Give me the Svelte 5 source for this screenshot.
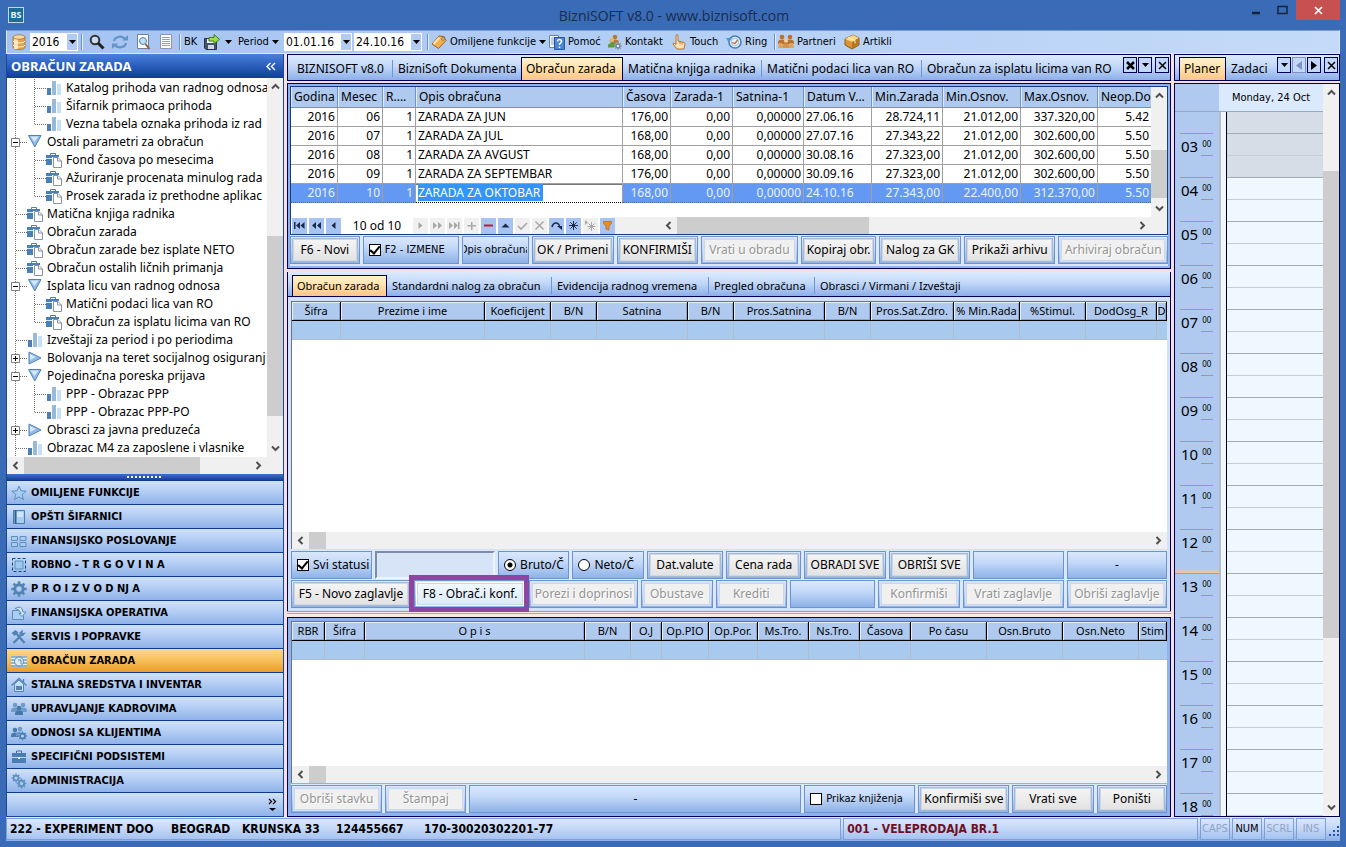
<script>
  const tree = [
    { level: 2, icon: 'bars', text: 'Katalog prihoda van radnog odnosa' },
    { level: 2, icon: 'bars', text: 'Šifarnik primaoca prihoda' },
    { level: 2, icon: 'bars', text: 'Vezna tabela oznaka prihoda iz rad', last: true },
    { level: 1, icon: 'down', text: 'Ostali parametri za obračun', box: '-' },
    { level: 2, icon: 'form', text: 'Fond časova po mesecima' },
    { level: 2, icon: 'form', text: 'Ažuriranje procenata minulog rada' },
    { level: 2, icon: 'form', text: 'Prosek zarada iz prethodne aplikac', last: true },
    { level: 1, icon: 'form', text: 'Matična knjiga radnika' },
    { level: 1, icon: 'form', text: 'Obračun zarada' },
    { level: 1, icon: 'form', text: 'Obračun zarade bez isplate NETO' },
    { level: 1, icon: 'form', text: 'Obračun ostalih ličnih primanja' },
    { level: 1, icon: 'down', text: 'Isplata licu van radnog odnosa', box: '-' },
    { level: 2, icon: 'form', text: 'Matični podaci lica van RO' },
    { level: 2, icon: 'form', text: 'Obračun za isplatu licima van RO', last: true },
    { level: 1, icon: 'bars', text: 'Izveštaji za period i po periodima' },
    { level: 1, icon: 'right', text: 'Bolovanja na teret socijalnog osiguranj', box: '+' },
    { level: 1, icon: 'down', text: 'Pojedinačna poreska prijava', box: '-' },
    { level: 2, icon: 'bars', text: 'PPP - Obrazac PPP' },
    { level: 2, icon: 'bars', text: 'PPP - Obrazac PPP-PO', last: true },
    { level: 1, icon: 'right', text: 'Obrasci za javna preduzeća', box: '+' },
    { level: 1, icon: 'bars', text: 'Obrazac M4 za zaposlene i vlasnike' }
  ];

  const modules = [
    { icon: 'star', text: 'OMILJENE FUNKCIJE' },
    { icon: 'book', text: 'OPŠTI ŠIFARNICI' },
    { icon: 'tiles', text: 'FINANSIJSKO POSLOVANJE' },
    { icon: 'frame', text: 'ROBNO - T R G O V I N A' },
    { icon: 'gear', text: 'P R O I Z V O D NJ A' },
    { icon: 'share', text: 'FINANSIJSKA OPERATIVA' },
    { icon: 'tools', text: 'SERVIS I POPRAVKE' },
    { icon: 'money', text: 'OBRAČUN ZARADA', active: true },
    { icon: 'house', text: 'STALNA SREDSTVA I INVENTAR' },
    { icon: 'people', text: 'UPRAVLJANJE KADROVIMA' },
    { icon: 'client', text: 'ODNOSI SA KLIJENTIMA' },
    { icon: 'case', text: 'SPECIFIČNI PODSISTEMI' },
    { icon: 'gears', text: 'ADMINISTRACIJA' }
  ];

  const links = [
    { icon: 'tag', text: 'Omiljene funkcije', width: 118, menu: true },
    { icon: 'help', text: 'Pomoć', width: 57 },
    { icon: 'contact', text: 'Kontakt', width: 65 },
    { icon: 'hand', text: 'Touch', width: 55 },
    { icon: 'ring', text: 'Ring', width: 45 },
    { sep: true },
    { icon: 'partners', text: 'Partneri', width: 66 },
    { icon: 'box', text: 'Artikli', width: 50 }
  ];

  const mainTabs = [
    { text: 'BIZNISOFT v8.0', width: 101, line: true },
    { text: 'BizniSoft Dokumenta', width: 128 },
    { text: 'Obračun zarada', width: 102, active: true },
    { text: 'Matična knjiga radnika', width: 139, line: true },
    { text: 'Matični podaci lica van RO', width: 160, line: true },
    { text: 'Obračun za isplatu licima van RO', width: 204 }
  ];

  const subTabs = [
    { text: 'Obračun zarada', width: 95, active: true },
    { text: 'Standardni nalog za obračun', width: 165, line: true },
    { text: 'Evidencija radnog vremena', width: 157, line: true },
    { text: 'Pregled obračuna', width: 106, line: true },
    { text: 'Obrasci / Virmani / Izveštaji', width: 166 }
  ];

  const payCols = [
    ['Godina', 47], ['Mesec', 45], ['R....', 33], ['Opis obračuna', 207], ['Časova', 48],
    ['Zarada-1', 62], ['Satnina-1', 71], ['Datum V...', 68], ['Min.Zarada', 71],
    ['Min.Osnov.', 78], ['Max.Osnov.', 77], ['Neop.Do']
  ];

  const payRows = [
    ['2016', '06', '1', 'ZARADA ZA JUN', '176,00', '0,00', '0,00000', '27.06.16', '28.724,11', '21.012,00', '337.320,00', '5.42'],
    ['2016', '07', '1', 'ZARADA ZA JUL', '168,00', '0,00', '0,00000', '27.07.16', '27.343,22', '21.012,00', '302.600,00', '5.50'],
    ['2016', '08', '1', 'ZARADA ZA AVGUST', '168,00', '0,00', '0,00000', '30.08.16', '27.323,00', '21.012,00', '302.600,00', '5.50'],
    ['2016', '09', '1', 'ZARADA ZA SEPTEMBAR', '176,00', '0,00', '0,00000', '30.09.16', '27.323,00', '21.012,00', '302.600,00', '5.50'],
    ['2016', '10', '1', 'ZARADA ZA OKTOBAR', '168,00', '0,00', '0,00000', '24.10.16', '27.343,00', '22.400,00', '312.370,00', '5.50']
  ];

  const workerCols = [
    ['Šifra', 49], ['Prezime i ime', 144], ['Koeficijent', 66], ['B/N', 46], ['Satnina', 91],
    ['B/N', 46], ['Pros.Satnina', 91], ['B/N', 46], ['Pros.Sat.Zdro.', 83], ['% Min.Rada', 66],
    ['%Stimul.', 66], ['DodOsg_R', 71], ['D']
  ];

  const itemCols = [
    ['RBR', 33], ['Šifra', 40], ['O p i s', 220], ['B/N', 46], ['O.J', 31], ['Op.PIO', 47],
    ['Op.Por.', 49], ['Ms.Tro.', 51], ['Ns.Tro.', 51], ['Časova', 51], ['Po času', 76],
    ['Osn.Bruto', 76], ['Osn.Neto', 76], ['Stim']
  ];

  // w is the share of the row, in the same units for every row
  const payActions = [
    { text: 'F6 - Novi', w: 70 }, { text: 'F2 - IZMENE', w: 97, kind: 'check', on: true, small: true },
    { text: 'Opis obračuna', w: 67, kind: 'label', small: true }, { text: 'OK / Primeni', w: 82 },
    { text: 'KONFIRMIŠI', w: 82 }, { text: 'Vrati u obradu', w: 97, off: true },
    { text: 'Kopiraj obr.', w: 76 }, { text: 'Nalog za GK', w: 82 },
    { text: 'Prikaži arhivu', w: 92 }, { text: 'Arhiviraj obračun', w: 110, off: true }
  ];

  const filterActions = [
    { text: 'Svi statusi', w: 82, kind: 'check', on: true }, { text: 'Filter statusa', w: 121, kind: 'input' },
    { text: 'Bruto/Č', w: 72, kind: 'radio', on: true }, { text: 'Neto/Č', w: 72, kind: 'radio' },
    { text: 'Dat.valute', w: 77 }, { text: 'Cena rada', w: 76 }, { text: 'OBRADI SVE', w: 82 },
    { text: 'OBRIŠI SVE', w: 82 }, { text: '', w: 92, kind: 'label' }, { text: '-', w: 101, kind: 'label' }
  ];

  const workerActions = [
    { text: 'F5 - Novo zaglavlje', w: 121 }, { text: 'F8 - Obrač.i konf.', w: 113, hot: true },
    { text: 'Porezi i doprinosi', w: 110, off: true }, { text: 'Obustave', w: 72, off: true },
    { text: 'Krediti', w: 72, off: true }, { text: '', w: 86, kind: 'label' },
    { text: 'Konfirmiši', w: 82, off: true }, { text: 'Vrati zaglavlje', w: 102, off: true },
    { text: 'Obriši zaglavlje', w: 101, off: true }
  ];

  const itemActions = [
    { text: 'Obriši stavku', w: 92, off: true }, { text: 'Štampaj', w: 82, off: true },
    { text: '-', w: 335, kind: 'label' }, { text: 'Prikaz knjiženja', w: 112, kind: 'check', small: true },
    { text: 'Konfirmiši sve', w: 92 }, { text: 'Vrati sve', w: 82 }, { text: 'Poništi', w: 71 }
  ];

  const navBefore = [['first', 'Prvi'], ['rew', 'Strana nazad'], ['prev', 'Prethodni']];
  const navAfter = [
    ['next', 'Sledeći', true], ['fwd', 'Strana napred', true], ['end', 'Poslednji', true], ['plus', 'Dodaj', true],
    ['minus', 'Obriši'], ['up', 'Izmeni'], ['ok', 'Potvrdi', true], ['x', 'Otkaži', true], ['redo', 'Osveži'],
    ['ast', 'Obeleži'], ['goast', 'Idi na obeleženo', true], ['filter', 'Filter']
  ];

  const hours = ['03', '04', '05', '06', '07', '08', '09', '10', '11', '12', '13', '14', '15', '16', '17', '18'];
</script>

{#snippet chevron(dir)}
  <svg class="chev" width="9" height="9" viewBox="0 0 9 9" fill="none" stroke="#505050" stroke-width="2">
    {#if dir === 'up'}<path d="M1 6.5 4.5 3 8 6.5" />
    {:else if dir === 'down'}<path d="M1 2.5 4.5 6 8 2.5" />
    {:else if dir === 'left'}<path d="M6.500 1 3 4.500 6.500 8" />
    {:else}<path d="M2.500 1 6 4.500 2.500 8" />{/if}
  </svg>
{/snippet}

{#snippet scrollbar(axis, before, size)}
  <div class="scroll {axis}">
    <button type="button" aria-label="Nazad">{@render chevron(axis === 'v' ? 'up' : 'left')}</button>
    <div class="track">
      <div style="flex: {before} 1 0px"></div>
      <div class="thumb" style="flex: {size} 1 0px"></div>
      <div style="flex: {100 - before - size} 1 0px"></div>
    </div>
    <button type="button" aria-label="Napred">{@render chevron(axis === 'v' ? 'down' : 'right')}</button>
  </div>
{/snippet}

{#snippet caret()}
  <svg width="7" height="4" viewBox="0 0 7 4"><path d="M0 0h7L3.500 4z" fill="#000" /></svg>
{/snippet}

{#snippet person(x, y, color)}
  <circle cx={x} cy={y} r="2.300" fill={color} />
  <path d="M{x - 4} {y + 7}v-1.500q0-3 4-3t4 3v1.500z" fill={color} />
{/snippet}

{#snippet cog(x, y, r, color)}
  <circle cx={x} cy={y} r={r * 0.6} fill="none" stroke={color} stroke-width={r * 0.42} />
  {#each [0, 45, 90, 135, 180, 225, 270, 315] as a}
    <rect x={x - r * 0.18} y={y - r * 1.1} width={r * 0.36} height={r * 0.4} fill={color} transform="rotate({a} {x} {y})" />
  {/each}
{/snippet}

{#snippet icon(name)}
  <svg class="icon" width="16" height="16" viewBox="0 0 16 16">
    {#if name === 'bars'}
      <path d="M1 8h4v7H1z" fill="#4d7fb0" /><path d="M6 1h4v14H6z" fill="#97b9da" /><path d="M11 4h4v11h-4z" fill="#c8dff5" />
    {:else if name === 'down'}
      <path d="M1.500 1.500h12.500L7.800 13z" fill="#8fbcea" stroke="#5680b2" /><path d="M3.500 2.500h8L7.500 8z" fill="#d5e8fb" />
    {:else if name === 'right'}
      <path d="M2 2v12l12-6z" fill="#8fbcea" stroke="#5680b2" /><path d="M3 4v6l6-3z" fill="#d5e8fb" />
    {:else if name === 'form'}
      <path d="M4.500 3.500v-2h5v2" fill="none" stroke="#4d7fb0" />
      <path d="M0 3h13v2H6v8H0z" fill="#4a80b4" /><path d="M0 6.500h6" stroke="#dce9f6" />
      <path d="M7.500 5.500h4.500l3.500 3.500v6.500h-8z" fill="#fff" stroke="#8a949e" /><path d="M11.500 5.500V9h4" fill="none" stroke="#8a949e" />
    {:else if name === 'star'}
      <path d="M8 1l2 4.800 5.200.4-4 3.300 1.300 5.100L8 11.800l-4.500 2.800 1.300-5.100-4-3.300L6 5.800z" fill="#a4cdf0" stroke="#5e8dbd" />
    {:else if name === 'book'}
      <path d="M2.500 1.500h11v13h-11z" fill="#a7cdf0" stroke="#4d7cab" /><path d="M4.500 1.500v13" stroke="#355f8c" stroke-width="2" />
      <path d="M6 3h6v5H6z" fill="#cde6fa" />
    {:else if name === 'tiles'}
      <g fill="#a8ceef" stroke="#5e8dbd"><path d="M.5 3.500h6v4h-6zM9 3.500h6v4H9zM.5 9.500h6v4h-6zM9 9.500h6v4H9z" /></g>
    {:else if name === 'frame'}
      <path d="M1.500 1.500h13v13h-13z" fill="none" stroke="#17446f" stroke-dasharray="3 2" />
      <path d="M4 4h8v8H4z" fill="#9cc9f0" stroke="#5e8dbd" />
    {:else if name === 'gear'}
      {@render cog(8, 8, 7, '#5384b4')}
    {:else if name === 'share'}
      <path d="M1.500 5.500h7l4 5v4h-11z" fill="#a9d0f3" stroke="#5e8dbd" />
      <path d="M4 3.500q7-4 8 3.500h3l-4 4.500L8 8.500h2q-1-4-6-5z" fill="#cfe6fa" stroke="#5e8dbd" />
    {:else if name === 'tools'}
      <path d="M2.500 14l7-7M5 4l8.500 10" stroke="#5384b4" stroke-width="2.400" />
      <path d="M.5 4l4-3 3 2.500-4 3.500zM8.500 7V3.500L12 .5 11.500 4l3.500-.500L12 7z" fill="#5384b4" />
    {:else if name === 'money'}
      <path d="M0 3h16v11H0z" fill="#8db4cf" /><path d="M0 5.500h16M0 8.500h16M0 11.500h16" stroke="#e7f2f7" />
      <circle cx="8" cy="8.500" r="4.500" fill="#dceaf2" stroke="#5c8eb3" /><path d="M7 7h3v4" fill="none" stroke="#5c8eb3" />
    {:else if name === 'house'}
      <path d="M3.500 7v7.500h9V7L8 3z" fill="#c7e0f8" stroke="#5384b4" />
      <path d="M.5 8.500L8 1.500l7.500 7M12.500 5V2" fill="none" stroke="#5384b4" stroke-width="1.300" /><path d="M5 9h6v4H5z" fill="#5384b4" />
    {:else if name === 'people'}
      {@render person(4, 4, '#6e9bc8')}{@render person(12, 4, '#6e9bc8')}{@render person(8, 7, '#4577aa')}
    {:else if name === 'client'}
      {@render person(4, 5, '#4a7cb0')}{@render person(9, 4, '#6e9bc8')}
      <circle cx="11.500" cy="11" r="4" fill="#b9d2f3" />{@render cog(11.500, 11, 4, '#4a7cb0')}
    {:else if name === 'case'}
      <path d="M5.500 4V2h5v2" fill="none" stroke="#3f72a4" /><path d="M1 4h14v10H1z" fill="#4a7db2" /><path d="M1 8.500h14" stroke="#c2d9f3" />
      <path d="M7 8h2v2H7z" fill="#dceafa" />
    {:else if name === 'gears'}
      {@render cog(5, 5, 4, '#6090c0')}{@render cog(10.500, 10.500, 4.500, '#6090c0')}
    {:else if name === 'db'}
      <path d="M2 3v10q0 2.500 6 2.500t6-2.500V3z" fill="#e3a24d" stroke="#9d6a28" stroke-width=".7" />
      <path d="M5 3v12" stroke="#fde3af" stroke-width="4" /><path d="M2 7q0 2 6 2t6-2M2 11q0 2 6 2t6-2" fill="none" stroke="#fff0d3" />
      <ellipse cx="8" cy="3" rx="6" ry="2.200" fill="#f8d99f" stroke="#9d6a28" stroke-width=".7" />
    {:else if name === 'search'}
      <circle cx="6" cy="6" r="4.300" fill="#c9dcf3" stroke="#333" stroke-width="2" /><path d="M9 9l5.500 5.500" stroke="#222" stroke-width="3" />
    {:else if name === 'refresh'}
      <path d="M2 7a6 5 0 0 1 11-2M14 9a6 5 0 0 1-11 2" fill="none" stroke="#6393c7" stroke-width="2.200" />
      <path d="M10 6.500h6V1zM6 9.500H0V15z" fill="#6393c7" />
    {:else if name === 'preview'}
      <path d="M2.500.5h11v14h-11z" fill="#fff" stroke="#6e7f99" /><circle cx="8" cy="7" r="3.500" fill="#bcdff5" stroke="#5685b5" /><path d="M10.500 10l4 5" stroke="#8a6238" stroke-width="2" />
    {:else if name === 'list'}
      <path d="M2.500.5h11v14h-11z" fill="#fff" stroke="#8797b5" /><path d="M4 3.500h8M4 5.500h8M4 7.500h8M4 9.500h8M4 11.500h8" stroke="#8ba2ca" />
    {:else if name === 'save'}
      <path d="M.5 4.500h12v11H2L.5 14z" fill="#44536b" stroke="#29364a" /><path d="M3 5h7v4H3z" fill="#eef2f7" /><path d="M4 11h6v4H4z" fill="#cfd7e2" />
      <path d="M5 3.500h5V.5l5.500 4.800L10 10V7H5z" fill="#9fdc4a" stroke="#3f7f16" />
    {:else if name === 'tag'}
      <path d="M1 10l7-8 5 .5 2 4-7.500 8z" fill="#f1b04c" stroke="#9a6320" /><path d="M2.500 10l6-6.500" stroke="#ffe3a8" stroke-width="2" /><circle cx="12" cy="5" r="1.300" fill="#fff" stroke="#7c6a55" />
    {:else if name === 'help'}
      <path d="M.5 1.500h9v12h-9z" fill="#fff" stroke="#6282ad" /><path d="M2 4h5M2 6h4M2 8h4M2 10h4" stroke="#7e9cc9" />
      <path d="M5.500 3.500h10v12h-10z" fill="#4a86d4" stroke="#2a5796" /><path d="M8.500 7.500q0-2 2-2t2 2q0 1-2 2.500v1M10.500 12.500v1.500" fill="none" stroke="#fff" stroke-width="1.500" />
    {:else if name === 'contact'}
      {@render person(9, 3, '#b67a35')}{@render person(6, 6.5, '#5b9c38')}<circle cx="6" cy="6" r="2.300" fill="#e7b27b" />
      <circle cx="12" cy="12" r="3.500" fill="#e3ebf5" />{@render cog(12, 12, 3.4, '#6d7f96')}
    {:else if name === 'hand'}
      <path d="M5 9V2q0-1.500 1-1.500T7 2v5l6 1.500q1 .5 1 1.500l-1 5H6L2 10q0-2 3 .5z" fill="#fbe0b4" stroke="#b7772e" /><path d="M9 8v2M11 8.500v2" stroke="#b7772e" />
    {:else if name === 'ring'}
      <circle cx="9" cy="8" r="6" fill="#e8f2fb" stroke="#4c81b8" stroke-width="1.600" /><path d="M6 8.500l3 1 3-4" fill="none" stroke="#c06c35" stroke-width="1.300" />
      <path d="M0 4h6L3 9z" fill="#5b93cf" /><circle cx="9" cy="8" r="3.800" fill="none" stroke="#9fc2e4" />
    {:else if name === 'partners'}
      {@render person(4, 3, '#b9722d')}{@render person(12, 3, '#b9722d')}{@render person(8, 7, '#d8934a')}
      <path d="M1 9h3l1 5H0zM12 9h3l1 5h-5z" fill="#dda35c" /><circle cx="8" cy="6.500" r="2" fill="#f5cf9f" />
    {:else if name === 'box'}
      <path d="M1 5l8-4 6 3v7l-7 4-7-4z" fill="#d9952f" stroke="#8d5a1c" /><path d="M1 5l7 3 7-4-6-3z" fill="#fbd588" /><path d="M8 8v7l7-4V4z" fill="#b87520" /><path d="M4 3.500l7 3v3" fill="none" stroke="#fff1cf" />
    {/if}
  </svg>
{/snippet}

{#snippet navIcon(name)}
  <svg width="11" height="11" viewBox="0 0 11 11" fill="currentColor" stroke="none">
    {#if name === 'first'}<path d="M0 2h1.500v7H0zM6 2v7L2 5.500zM10.500 2v7l-4-3.500z" />
    {:else if name === 'rew'}<path d="M5 2v7L1 5.500zM10 2v7L6 5.500z" />
    {:else if name === 'prev'}<path d="M7.500 2v7l-4-3.500z" />
    {:else if name === 'next'}<path d="M3.500 2v7l4-3.500z" />
    {:else if name === 'fwd'}<path d="M1 2v7l4-3.500zM6 2v7l4-3.500z" />
    {:else if name === 'end'}<path d="M0 2v7l4-3.500zM5 2v7l4-3.500zM9 2h1.500v7H9z" />
    {:else if name === 'plus'}<path d="M5 2h1.500v3H10v1.500H6.500V10H5V6.500H1.500V5H5z" />
    {:else if name === 'minus'}<path d="M1 4.500h9v2H1z" fill="#c01834" />
    {:else if name === 'up'}<path d="M1.500 7.500h8L5.500 3.500z" />
    {:else if name === 'ok'}<path d="M1 6l3 3 6-6" fill="none" stroke="currentColor" stroke-width="1.700" />
    {:else if name === 'x'}<path d="M1.500 1.500l8 8M9.500 1.500l-8 8" fill="none" stroke="currentColor" stroke-width="1.500" />
    {:else if name === 'redo'}<path d="M1 7q1-4 4-4t3.500 4" fill="none" stroke="currentColor" stroke-width="1.600" /><path d="M6 6h5v4z" />
    {:else if name === 'ast'}<path d="M5.500 1v9M1 5.500h9M2.300 2.300l6.400 6.400M8.700 2.300l-6.400 6.400" fill="none" stroke="currentColor" />
    {:else if name === 'goast'}<path d="M6.500 2v9M2.500 6.500h8M3.500 3.500l6 6M9.500 3.500l-6 6" fill="none" stroke="currentColor" /><path d="M0 0v5l3-2.500z" />
    {:else}<path d="M1.500 1.500h8v2L7 6v4L4 9V6L1.500 3.500z" fill="#f08a1c" stroke="#b35a0c" stroke-width=".6" />{/if}
  </svg>
{/snippet}

{#snippet tabs(list, label)}
  <div class="tabs" role="tablist" aria-label={label}>
    {#each list as t}
      <button type="button" role="tab" class="tab" class:active={t.active} class:line={t.line} aria-selected={!!t.active} style="width: {t.width}px">{t.text}</button>
    {/each}
  </div>
{/snippet}

{#snippet actions(list)}
  <div class="actions">
    {#each list as a}
      <div class="cell" class:small={a.small} class:field={a.kind === 'input'} style="flex-grow: {a.w}">
        {#if a.kind === 'label'}
          <span class="caption">{a.text}</span>
        {:else if a.kind === 'check'}
          <label><input type="checkbox" checked={a.on} />{a.text}</label>
        {:else if a.kind === 'radio'}
          <label><input type="radio" name="rate" checked={a.on} />{a.text}</label>
        {:else if a.kind === 'input'}
          <input type="text" aria-label={a.text} />
        {:else}
          <button type="button" class:hot={a.hot} disabled={a.off}>{a.text}</button>
          {#if a.hot}<span class="marker"></span>{/if}
        {/if}
      </div>
    {/each}
  </div>
{/snippet}

{#snippet emptyGrid(cols)}
  <div class="sheet">
    <table class="grid flat">
      <colgroup>{#each cols as c}<col style={c[1] ? `width: ${c[1]}px` : ''} />{/each}</colgroup>
      <thead><tr>{#each cols as c}<th>{c[0]}</th>{/each}</tr></thead>
      <tbody><tr>{#each cols as c}<td></td>{/each}</tr></tbody>
    </table>
    <div class="blank"></div>
    {@render scrollbar('h', 0, 2)}
  </div>
{/snippet}

<div class="window">
  <header class="titlebar">
    <span class="logo">BS</span>
    <h1>BizniSOFT v8.0 - www.biznisoft.com</h1>
    <div class="winbtns">
      <button type="button" aria-label="Umanji"><svg width="10" height="10"><path d="M1 8h8" stroke="#16243c" stroke-width="2.500" /></svg></button>
      <button type="button" aria-label="Uvećaj"><svg width="11" height="10"><path d="M1 1.500h9v7H1z" fill="none" stroke="#16243c" stroke-width="1.500" /></svg></button>
      <button type="button" class="close" aria-label="Zatvori"><svg width="9" height="9"><path d="M1 1l7 7M8 1L1 8" stroke="#fff" stroke-width="1.700" /></svg></button>
    </div>
  </header>

  <nav class="toolbar">
    <span class="tool">{@render icon('db')}</span>
    <span class="combo year">
      <select aria-label="Godina"><option>2016</option></select>
      <i>{@render caret()}</i>
    </span>
    <span class="sep"></span>
    <button type="button" class="tool" aria-label="Traži">{@render icon('search')}</button>
    <button type="button" class="tool" aria-label="Osveži">{@render icon('refresh')}</button>
    <button type="button" class="tool" aria-label="Pregled">{@render icon('preview')}</button>
    <button type="button" class="tool" aria-label="Lista">{@render icon('list')}</button>
    <span class="sep wide"></span>
    <button type="button" class="word bk">BK</button>
    <button type="button" class="word save" aria-label="Sačuvaj">{@render icon('save')}{@render caret()}</button>
    <button type="button" class="word period">Period {@render caret()}</button>
    <span class="combo date"><input type="text" value="01.01.16" aria-label="Od datuma" /><i>{@render caret()}</i></span>
    <span class="combo date"><input type="text" value="24.10.16" aria-label="Do datuma" /><i>{@render caret()}</i></span>
    <span class="sep"></span>
    {#each links as l}
      {#if l.sep}
        <span class="sep"></span>
      {:else}
        <button type="button" class="word" style="width: {l.width}px">{@render icon(l.icon)}{l.text}{#if l.menu}{@render caret()}{/if}</button>
      {/if}
    {/each}
  </nav>

  <div class="body">
    <aside class="side">
      <h2>OBRAČUN ZARADA <button type="button" aria-label="Sakrij"><svg width="10" height="9" fill="none" stroke="#fff" stroke-width="1.400"><path d="M4.500 1L1 4.500 4.500 8M9 1L5.500 4.500 9 8" /></svg></button></h2>
      <div class="treebox">
        <ul class="tree">
          {#each tree as n}
            <li>
              <svg width={n.level * 19} height="18" fill="none" stroke="#707070" stroke-dasharray="1 1">
                <path d="M7.500 0v18" />
                {#if n.level === 2}
                  <path d={n.last ? 'M26.500 0v9' : 'M26.500 0v18'} /><path d="M27 9.500h11" />
                {:else}
                  <path d="M8 9.500h11" />
                {/if}
                {#if n.box}
                  <path d="M3.500 5.500h8v8h-8z" fill="#fff" stroke="#808080" stroke-dasharray="none" />
                  <path d={n.box === '+' ? 'M5 9.500h5M7.500 7v5' : 'M5 9.500h5'} stroke="#000" stroke-dasharray="none" />
                {/if}
              </svg>
              {@render icon(n.icon)}
              <a href="#stavka">{n.text}</a>
            </li>
          {/each}
        </ul>
        {@render scrollbar('v', 41, 52)}
      </div>
      <div class="treefoot">{@render scrollbar('h', 0, 78)}</div>
      <div class="grip"></div>
      <div class="modules">
        {#each modules as m}
          <button type="button" class:active={m.active}>{@render icon(m.icon)}{m.text}</button>
        {/each}
        <button type="button" class="more" aria-label="Još"><svg width="10" height="14" fill="none" stroke="#000" stroke-width="1.300"><path d="M1 1l2.500 2.500L1 6M5 1l2.500 2.500L5 6" /><path d="M1 10h7l-3.500 3z" fill="#000" stroke="none" /></svg></button>
      </div>
    </aside>

    <main>
      <div class="tabbar">
        {@render tabs(mainTabs, 'Prozori')}
        <div class="tabbtns">
          <button type="button" aria-label="Zatvori sve"><svg width="9" height="9"><path d="M1 1l7 7M8 1L1 8" stroke="#000" stroke-width="2.500" /></svg></button>
          <button type="button" aria-label="Lista">{@render caret()}</button>
          <button type="button" class="apart" aria-label="Zatvori"><svg width="9" height="9"><path d="M1 1l7 7M8 1L1 8" stroke="#000" stroke-width="1.500" /></svg></button>
        </div>
      </div>

      <section class="panel pay">
        <div class="payview">
          <div class="clip">
            <table class="grid">
              <colgroup>{#each payCols as c}<col style={c[1] ? `width: ${c[1]}px` : ''} />{/each}</colgroup>
              <thead><tr>{#each payCols as c}<th>{c[0]}</th>{/each}</tr></thead>
              <tbody>
                {#each payRows as r, i}
                  <tr class:selected={i === 4}>
                    {#each r as v, j}
                      <td class:text={j === 3 || j === 7} class:edit={i === 4 && j === 3}>{#if i === 4 && j === 3}<mark>{v}&nbsp;</mark>{:else}{v}{/if}</td>
                    {/each}
                  </tr>
                {/each}
              </tbody>
            </table>
          </div>
          {@render scrollbar('v', 48, 50)}
        </div>
        <div class="navrow">
          <div class="nav">
            {#each navBefore as [n, label]}
              <button type="button" aria-label={label}>{@render navIcon(n)}</button>
            {/each}
            <span class="pos">10 od 10</span>
            {#each navAfter as [n, label, off]}
              <button type="button" aria-label={label} disabled={off}>{@render navIcon(n)}</button>
            {/each}
          </div>
          {@render scrollbar('h', 0, 42)}
          <span class="corner"></span>
        </div>
        {@render actions(payActions)}
      </section>

      <div class="tabbar sub">{@render tabs(subTabs, 'Obračun')}</div>
      <section class="workers">
        {@render emptyGrid(workerCols)}
        {@render actions(filterActions)}
        {@render actions(workerActions)}
      </section>
      <div class="splitter"></div>
      <section class="panel items">
        {@render emptyGrid(itemCols)}
        {@render actions(itemActions)}
      </section>
    </main>

    <aside class="planner">
      <div class="tabbar">
        {@render tabs([{ text: 'Planer', width: 47, active: true }, { text: 'Zadaci', width: 48 }], 'Planer')}
        <div class="tabbtns">
          <button type="button" aria-label="Lista">{@render caret()}</button>
          <button type="button" aria-label="Levo" disabled><svg width="6" height="9"><path d="M6 0v9L0 4.500z" fill="#7d93bb" /></svg></button>
          <button type="button" aria-label="Desno"><svg width="6" height="9"><path d="M0 0v9l6-4.500z" fill="#000" /></svg></button>
          <button type="button" class="apart" aria-label="Zatvori"><svg width="9" height="9"><path d="M1 1l7 7M8 1L1 8" stroke="#000" stroke-width="1.500" /></svg></button>
        </div>
      </div>
      <div class="day">
        <div class="dayview">
          <div class="dayhead"><span></span><b>Monday, 24 Oct</b></div>
          <div class="slots">
            <div class="slot half away"><span class="hour"></span><span class="gutter"></span><span class="lines"><i></i></span></div>
            {#each hours as h}
              <div class="slot" class:away={h === '03'} class:now={h === '12'}>
                <span class="hour">{h}<sup>00</sup></span>
                <span class="gutter"></span>
                <span class="lines"><i></i><i></i></span>
              </div>
            {/each}
          </div>
        </div>
        {@render scrollbar('v', 10, 67)}
      </div>
    </aside>
  </div>

  <footer class="status">
    <div class="company">
      <span class="c1">222 - EXPERIMENT DOO</span><span class="c2">BEOGRAD</span><span class="c3">KRUNSKA 33</span><span class="c4">124455667</span><span>170-30020302201-77</span>
    </div>
    <div class="store">001 - VELEPRODAJA BR.1</div>
    <div class="key">CAPS</div>
    <div class="key on">NUM</div>
    <div class="key">SCRL</div>
    <div class="key">INS</div>
    <svg width="12" height="20" viewBox="0 0 12 20" fill="#27549e"><path d="M9 8h2v2H9zM5 12h2v2H5zM9 12h2v2H9zM1 16h2v2H1zM5 16h2v2H5zM9 16h2v2H9z" /></svg>
  </footer>
</div>

<style>
  :global(body) {
    margin: 0;
    background: #396bb7;
  }

  .window {
    --navy: #00005a;
    --bar: linear-gradient(#dceafc, #c3d8f8 45%, #8cafe8);
    --narrow: 'DejaVu Sans Condensed', 'Noto Sans', sans-serif;
    height: 100vh;
    display: flex;
    flex-direction: column;
    padding: 0 6px 6px;
    box-sizing: border-box;
    background: #396bb7;
    font-family: 'Noto Sans', 'DejaVu Sans Condensed', sans-serif;
    font-size: 12px;
    line-height: 16px;
    color: #000;
    overflow: hidden;
  }

  .window :global(*) {
    box-sizing: border-box;
  }

  button, input, select {
    font: inherit;
    color: inherit;
    margin: 0;
    padding: 0;
    border: 0;
    border-radius: 0;
    background: none;
  }

  svg {
    flex: none;
    display: block;
  }

  .titlebar {
    flex: none;
    height: 30px;
    display: flex;
    align-items: center;
  }

  .logo {
    width: 16px;
    height: 16px;
    margin-left: 2px;
    border: 1px solid #b9d6ea;
    background: #1c6d93;
    color: #e6f4fa;
    font-size: 9px;
    font-weight: bold;
    line-height: 14px;
    text-align: center;
  }

  h1 {
    flex: 1;
    margin: 0;
    padding-left: 82px;
    font: 14px 'Open Sans', 'Noto Sans', sans-serif;
    text-align: center;
    color: #1a2c4c;
  }

  .winbtns {
    display: flex;
    height: 100%;
  }

  .winbtns button {
    width: 27px;
    height: 20px;
    display: flex;
    align-items: center;
    justify-content: center;
  }

  .winbtns .close {
    width: 44px;
    background: #c75050;
  }

  .toolbar {
    flex: none;
    height: 24px;
    display: flex;
    align-items: center;
    border: 1px solid #dbe8fa;
    border-top-color: #7d9cc9;
    background: linear-gradient(90deg, #a5c3f2, #b4cff5 50%, #c4daf8);
    font-family: var(--narrow);
    font-size: 11px;
    overflow: hidden;
  }

  .tool {
    width: 23px;
    display: flex;
    justify-content: center;
    flex: none;
  }

  .sep {
    width: 2px;
    height: 16px;
    margin: 0 2px 0 3px;
    border-left: 1px solid #6a8fcb;
    border-right: 1px solid #e6f0fd;
    flex: none;
  }

  .sep.wide {
    margin-left: 2px;
    margin-right: 3px;
  }

  .combo {
    display: flex;
    height: 18px;
    background: #fff;
    flex: none;
  }

  .combo select, .combo input {
    width: 100%;
    padding-left: 2px;
    appearance: none;
    font-size: 12px;
  }

  .combo i {
    flex: none;
    width: 11px;
    background: #b1cbf4;
    border: solid #fff;
    border-width: 1px 1px 1px 0;
    display: flex;
    align-items: center;
    justify-content: center;
  }

  .combo.year {
    width: 48px;
  }

  .combo.date {
    width: 68px;
    margin-right: 2px;
  }

  .word {
    display: flex;
    align-items: center;
    gap: 3px;
    flex: none;
    white-space: nowrap;
    overflow: hidden;
  }

  .word.bk {
    width: 20px;
  }

  .word.save {
    width: 34px;
    gap: 5px;
  }

  .word.period {
    width: 46px;
  }

  .body {
    flex: 1;
    min-height: 0;
    display: flex;
    gap: 3px;
    background: #f5dfe1;
  }

  .side {
    flex: none;
    width: 278px;
    display: flex;
    flex-direction: column;
    border: 1px solid #1d479b;
    border-top: 0;
  }

  h2 {
    flex: none;
    display: flex;
    justify-content: space-between;
    align-items: center;
    height: 24px;
    margin: 0;
    padding: 0 7px 0 4px;
    background: linear-gradient(#4a80dc, #2457b4 60%, #123d92);
    color: #fff;
    font-size: 13px;
  }

  .treebox {
    flex: 1;
    min-height: 0;
    display: flex;
    background: #fff;
  }

  .tree {
    flex: 1;
    min-width: 0;
    margin: 0;
    padding: 1px 0 0 1px;
    list-style: none;
    overflow: hidden;
  }

  .tree li {
    display: flex;
    align-items: center;
    height: 18px;
    white-space: nowrap;
  }

  .tree a {
    margin-left: 4px;
    color: #000;
    text-decoration: none;
  }

  .treefoot {
    flex: none;
    padding-right: 16px;
    background: #f0f0f0;
  }

  .scroll {
    display: flex;
    background: #f0f0f0;
    flex: none;
  }

  .scroll.v {
    flex-direction: column;
    width: 16px;
  }

  .scroll.h {
    height: 17px;
  }

  .scroll button {
    display: flex;
    align-items: center;
    justify-content: center;
    width: 17px;
    height: 17px;
    flex: none;
  }

  .scroll.v button {
    width: 16px;
  }

  .track {
    flex: 1;
    display: flex;
  }

  .v .track {
    flex-direction: column;
  }

  .thumb {
    background: #cdcdcd;
  }

  .grip {
    flex: none;
    height: 6px;
    background: linear-gradient(#3c70d0, #14419a);
    display: flex;
    justify-content: center;
    align-items: center;
  }

  .grip::after {
    content: '';
    width: 36px;
    height: 2px;
    background: repeating-linear-gradient(90deg, #fff 0 2px, transparent 2px 4px);
  }

  .modules {
    flex: none;
    display: flex;
    flex-direction: column;
  }

  .modules button {
    display: flex;
    align-items: center;
    gap: 4px;
    height: 24px;
    padding-left: 4px;
    border-top: 1px solid #0c3a90;
    background: linear-gradient(#d0e2fa, #b1cbf3 50%, #8fb2e8);
    font-family: var(--narrow);
    font-size: 11px;
    font-weight: bold;
    white-space: pre;
  }

  .modules .active {
    background: linear-gradient(#fbd98c, #f7bf59 50%, #ec9c2a);
  }

  .modules .more {
    justify-content: flex-end;
    padding-right: 5px;
  }

  main {
    flex: 1;
    min-width: 0;
    display: flex;
    flex-direction: column;
  }

  .tabbar {
    flex: none;
    height: 27px;
    display: flex;
    justify-content: space-between;
    border: 1px solid var(--navy);
    background: var(--bar);
    margin-bottom: 2px;
  }

  .tabs {
    display: flex;
    align-items: flex-end;
    padding-left: 4px;
    min-width: 0;
    overflow: hidden;
  }

  .tab {
    height: 23px;
    padding-left: 5px;
    border-top: 1px solid transparent;
    text-align: left;
    white-space: nowrap;
    flex: none;
  }

  .tab.line {
    border-right: 1px solid #6f95d2;
    border-image: linear-gradient(transparent 15%, #6f95d2 15% 85%, transparent 85%) 1;
    border-top-width: 0;
  }

  .tab.active {
    padding-left: 4px;
    border: 1px solid var(--navy);
    border-bottom: 0;
    background: linear-gradient(#fff3cf, #ffe0a6 50%, #ffc489);
  }

  .tabbtns {
    display: flex;
    gap: 1px;
    padding: 2px 1px 0 0;
    flex: none;
  }

  .tabbtns button {
    width: 14px;
    height: 16px;
    display: flex;
    align-items: center;
    justify-content: center;
    border: 1px solid var(--navy);
    background: #c3d8f8;
  }

  .tabbtns button:disabled {
    border-color: #7d93bb;
  }

  .tabbtns .apart {
    margin-left: 2px;
  }

  .tabbar.sub {
    height: 25px;
    margin: 3px 0 0;
    border-top: 0;
    font-size: 11px;
  }

  .sub .tab {
    height: 21px;
  }

  .panel {
    border: 1px solid var(--navy);
    padding: 2px;
    background: #8db2ec;
  }

  .pay {
    flex: none;
    height: 186px;
    display: flex;
    flex-direction: column;
  }

  .payview {
    flex: 1;
    display: flex;
    border: solid #173c86;
    border-width: 1px 1px 0;
    background: #fff;
    min-height: 0;
  }

  .clip {
    flex: 1;
    min-width: 0;
    overflow: hidden;
  }

  .grid {
    width: 100%;
    table-layout: fixed;
    border-collapse: separate;
    border-spacing: 0;
  }

  .grid th {
    height: 21px;
    padding: 0 0 0 3px;
    background: #afcaee;
    border-right: 1px solid #7295c8;
    border-bottom: 1px solid #6d93c9;
    box-shadow: inset 1px 0 #e0ecfa;
    font-weight: normal;
    text-align: left;
    white-space: nowrap;
    overflow: hidden;
  }

  .grid td {
    height: 19px;
    padding: 0 2px;
    border-right: 1px solid #a0a0a0;
    border-bottom: 1px solid #a0a0a0;
    text-align: right;
    line-height: 18px;
    white-space: nowrap;
    overflow: hidden;
  }

  .grid td.text {
    text-align: left;
  }

  .grid th:last-child, .grid td:last-child {
    border-right: 0;
  }

  .grid .selected td {
    background: #6499f3;
    color: #e9f2ff;
    border-bottom: 1px dotted #5a6d94;
  }

  .grid .selected td.edit {
    background: #fff;
    border-bottom: 1px dotted #000;
    box-shadow: inset 0 1px #777;
  }

  mark {
    background: #3494f8;
    color: #fff;
  }

  .navrow {
    flex: none;
    display: flex;
    align-items: center;
    height: 18px;
    border: solid #173c86;
    border-width: 0 1px 1px;
    background: #f0f0f0;
  }

  .nav {
    flex: none;
    width: 369px;
    height: 100%;
    display: flex;
    align-items: center;
    gap: 2px;
    padding-left: 1px;
    background: linear-gradient(90deg, #fff 320px, #f0f0f0 320px);
  }

  .nav button {
    width: 15px;
    height: 16px;
    display: flex;
    align-items: center;
    justify-content: center;
    background: #a6c3f2;
    color: #1b2a48;
  }

  .nav button:disabled {
    background: #f0f0f0;
    color: #a8a8a8;
  }

  .pos {
    width: 68px;
    text-align: center;
    white-space: nowrap;
  }

  .navrow :global(.scroll) {
    flex: 1;
  }

  .corner {
    width: 16px;
  }

  .actions {
    flex: none;
    display: flex;
    gap: 3px;
    height: 29px;
    padding: 1px 0 0;
    background: #dbe8fa;
  }

  .pay .actions {
    height: 31px;
    padding: 1px 0 2px;
  }

  .cell {
    flex: 1 1 0;
    min-width: 0;
    position: relative;
    display: flex;
    box-shadow: inset 0 0 0 1px #6d94cf;
    background: linear-gradient(#dce9fc, #c4d9f8 40%, #8aafe6);
  }

  .cell button {
    flex: 1;
    min-width: 0;
    margin: 2px;
    overflow: hidden;
    display: flex;
    align-items: center;
    justify-content: center;
    border: 1px solid #a9b9d0;
    box-shadow: inset 0 0 0 1px #ccd7e8;
    background: linear-gradient(#f5f5f5, #e2e2e2);
    white-space: nowrap;
  }

  .cell button:disabled {
    border-color: #d3dff4;
    background: #f0f0f0;
    color: #949494;
    text-shadow: 1px 1px #fff;
  }

  .cell button.hot {
    border-color: #fff;
    background: linear-gradient(#f2f9ff, #dbeafa);
  }

  .cell.small {
    font-family: var(--narrow);
    font-size: 11px;
  }

  .cell label {
    flex: 1;
    display: flex;
    align-items: center;
    padding-left: 6px;
    gap: 4px;
    white-space: nowrap;
    overflow: hidden;
  }

  .cell label input {
    appearance: none;
    flex: none;
    width: 12px;
    height: 12px;
    border: 1px solid #000;
    background: #fff;
  }

  .cell input[type='checkbox']:checked {
    display: flex;
    align-items: center;
    justify-content: center;
  }

  .cell input[type='checkbox']:checked::after {
    content: '';
    width: 4px;
    height: 8px;
    margin-bottom: 2px;
    border: solid #000;
    border-width: 0 2px 2px 0;
    rotate: 40deg;
  }

  .cell input[type='radio'] {
    border-radius: 50%;
  }

  .cell input[type='radio']:checked {
    background: radial-gradient(#000 0 2px, #fff 3px);
  }

  .cell.field {
    box-shadow: none;
  }

  .cell input[type='text'] {
    width: 100%;
    border: 2px solid #7d8ca8;
    border-right-color: #eef4fc;
    border-bottom-color: #eef4fc;
    background: #d7e4f7;
  }

  .caption {
    flex: 1;
    min-width: 0;
    margin: 0 2px;
    display: flex;
    align-items: center;
    justify-content: center;
    white-space: nowrap;
    overflow: hidden;
  }

  .marker {
    position: absolute;
    inset: -5px -3px -4px -5px;
    border: 5px solid #8e44a3;
    pointer-events: none;
    z-index: 1;
  }

  .workers {
    flex: 316 1 0;
    min-height: 0;
    display: flex;
    flex-direction: column;
    padding: 4px 3px 3px;
    border-left: 1px solid var(--navy);
    border-right: 1px solid var(--navy);
    background: #d3e2f8;
  }

  .sheet {
    flex: 1;
    min-height: 0;
    display: flex;
    flex-direction: column;
    margin-bottom: 1px;
    border: solid #6b7483;
    border-width: 1px 0 0 1px;
    background: #fff;
    font-size: 11px;
  }

  .blank {
    flex: 1;
  }

  .grid.flat th {
    height: 19px;
    padding: 0;
    text-align: center;
    border-right: 1px solid #000;
    border-bottom: 1px solid #000;
    box-shadow: inset 1px 1px #e3eefb, inset -1px -1px #8ba6cc;
  }

  .grid.flat td {
    background: #a8caef;
    border-color: #b4bcc8;
  }

  .splitter {
    flex: none;
    height: 6px;
    background: linear-gradient(#b98f8f 1px, #f8e9e2 1px 2px, #c59e94 2px 3px, #f8e9e2 3px);
  }

  .items {
    flex: 198 1 0;
    min-height: 0;
    display: flex;
    flex-direction: column;
    padding: 3px;
  }

  .planner {
    flex: none;
    width: 166px;
    display: flex;
    flex-direction: column;
  }

  .day {
    flex: 1;
    min-height: 0;
    display: flex;
    border: 1px solid var(--navy);
    background: #eff7ff;
  }

  .dayview {
    flex: 1;
    min-width: 0;
    display: flex;
    flex-direction: column;
  }

  .dayhead {
    flex: none;
    height: 28px;
    display: flex;
    border-bottom: 1px solid #9aa9bf;
    background: #dbe9fd;
    font-family: var(--narrow);
  }

  .dayhead span {
    width: 44px;
    background: #afcaee;
  }

  .dayhead b {
    flex: 1;
    display: flex;
    align-items: center;
    justify-content: center;
    font-size: 11px;
    font-weight: normal;
    white-space: nowrap;
  }

  .slots {
    flex: 1;
    min-height: 0;
    overflow: hidden;
  }

  .slot {
    display: flex;
    height: 44px;
  }

  .slot.half {
    height: 22px;
  }

  .hour {
    width: 44px;
    padding: 2px 0 0 6px;
    display: flex;
    gap: 4px;
    font-size: 15px;
    line-height: 20px;
    background:
      linear-gradient(#9a9a9a, #9a9a9a) 5px 100% / 33px 1px no-repeat,
      linear-gradient(#9a9a9a, #9a9a9a) 26px 21px / 12px 1px no-repeat,
      #afcaee;
  }

  .now .hour {
    background:
      linear-gradient(#9a9a9a, #9a9a9a) 26px 21px / 12px 1px no-repeat,
      linear-gradient(#e0954a, #e0954a) 0 100% / 44px 1px no-repeat,
      linear-gradient(#c9cdd8, #ffbf78) 0 100% / 44px 4px no-repeat,
      #afcaee;
  }

  .hour sup {
    font-size: 8px;
    line-height: 16px;
  }

  .gutter {
    width: 8px;
    background: #eff7ff;
    border-left: 2px solid #b7bcc8;
    border-right: 1px solid #000;
  }

  .lines {
    flex: 1;
    display: flex;
    flex-direction: column;
    background: #eff7ff;
  }

  .lines i {
    flex: 1;
    border-bottom: 1px solid #c5ced8;
  }

  .lines i:last-child {
    border-bottom-color: #9eabb9;
  }

  .away .lines {
    background: #d6dde6;
  }

  .status {
    flex: none;
    height: 24px;
    display: flex;
    gap: 2px;
    padding: 1px 0;
    background: var(--bar);
    font-family: var(--narrow);
    font-weight: bold;
  }

  .status > div {
    display: flex;
    align-items: center;
    border: 1px solid #7c9fd6;
    background: linear-gradient(#dbe8fb, #bdd3f5 60%, #a5c2f0);
    white-space: nowrap;
    overflow: hidden;
  }

  .company {
    flex: 838 1 0;
    padding-left: 3px;
  }

  .store {
    flex: 353 1 0;
    padding-left: 3px;
    color: #6e1024;
  }

  .c1 {
    width: 161px;
  }

  .c2 {
    width: 71px;
  }

  .c3 {
    width: 94px;
  }

  .c4 {
    width: 88px;
  }

  .status .key {
    width: 30px;
    justify-content: center;
    font-size: 11px;
    font-weight: normal;
    color: #8fa3c4;
  }

  .status .key.on {
    color: #000;
  }
</style>
